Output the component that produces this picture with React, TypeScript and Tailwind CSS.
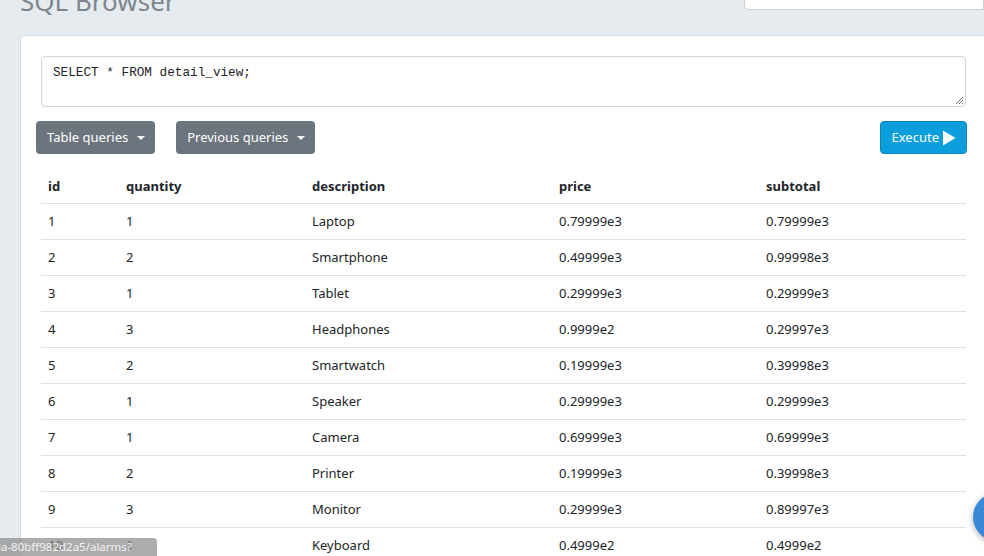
import React from "react";

const rows = [
  ["1", "1", "Laptop", "0.79999e3", "0.79999e3"],
  ["2", "2", "Smartphone", "0.49999e3", "0.99998e3"],
  ["3", "1", "Tablet", "0.29999e3", "0.29999e3"],
  ["4", "3", "Headphones", "0.9999e2", "0.29997e3"],
  ["5", "2", "Smartwatch", "0.19999e3", "0.39998e3"],
  ["6", "1", "Speaker", "0.29999e3", "0.29999e3"],
  ["7", "1", "Camera", "0.69999e3", "0.69999e3"],
  ["8", "2", "Printer", "0.19999e3", "0.39998e3"],
  ["9", "3", "Monitor", "0.29999e3", "0.89997e3"],
  ["10", "1", "Keyboard", "0.4999e2", "0.4999e2"],
];

const Caret = () => (
  <span className="ml-[9px] inline-block h-0 w-0 border-x-[4px] border-t-[4.5px] border-x-transparent border-t-white align-middle" />
);

export default function App() {
  return (
    <div
      className="relative h-[556px] w-[984px] overflow-hidden bg-[#e5ebef] text-[#212529]"
      style={{ fontFamily: '"Noto Sans", "Open Sans", sans-serif' }}
    >
      <div className="flex h-[35px] items-start justify-between">
        <div className="ml-[20px] -mt-[15px] text-[26px] leading-[32px] text-[#7d868d]">SQL Browser</div>
        <div className="-mt-[30px] h-[40px] w-[240px] rounded-bl-[5px] border border-[#c9d1d8] bg-white" />
      </div>
      <div className="ml-[20px] w-[966px] rounded-tl-[4px] border-l border-t border-[#d2dbe2] bg-white p-5">
        <div
          className="relative h-[51px] w-full rounded-[4px] border border-[#ced4da] px-[11px] pt-[8px] text-[12.7px] leading-[16px] text-[#212529]"
          style={{ fontFamily: '"Liberation Mono", monospace' }}
        >
          SELECT * FROM detail_view;
          <svg className="absolute bottom-[2px] right-[2px]" width="8" height="8" viewBox="0 0 8 8">
            <path d="M8 1 L1 8 M8 4 L4 8 M8 7 L7 8" stroke="#777" strokeWidth="1" />
          </svg>
        </div>
        <div className="-ml-[5px] -mr-[1px] mt-[14px] flex items-center">
          <button className="flex h-[33px] items-center rounded-[4px] bg-[#6c757d] pl-[11px] pr-[10px] pt-[1px] text-[13px] text-white">
            Table queries
            <Caret />
          </button>
          <button className="ml-[21px] flex h-[33px] items-center rounded-[4px] bg-[#6c757d] pl-[11px] pr-[10px] pt-[1px] text-[13px] text-white">
            Previous queries
            <Caret />
          </button>
          <button className="ml-auto flex h-[33px] items-center rounded-[4px] border border-[#0a86bb] bg-[#0a9fdc] pl-[11px] pr-[10px] pt-[1px] text-[13px] text-white">
            Execute
            <svg className="ml-[3px]" width="14" height="16" viewBox="0 0 14 16">
              <path d="M1 0.5 L13.5 8 L1 15.5 Z" fill="white" />
            </svg>
          </button>
        </div>
        <table className="mt-[14px] w-full border-collapse text-[13px]">
          <thead>
            <tr className="h-[35px] border-b border-[#dee2e6] text-left font-bold">
              <th className="w-[78px] pl-[7px] pt-[2px] font-bold">id</th>
              <th className="w-[186px] pl-[7px] pt-[2px] font-bold">quantity</th>
              <th className="w-[247px] pl-[7px] pt-[2px] font-bold">description</th>
              <th className="w-[207px] pl-[7px] pt-[2px] font-bold">price</th>
              <th className="pl-[7px] pt-[2px] font-bold">subtotal</th>
            </tr>
          </thead>
          <tbody>
            {rows.map((r) => (
              <tr key={r[0]} className="h-[36px] border-b border-[#dee2e6]">
                {r.map((c, i) => (
                  <td key={i} className="pl-[7px] pt-[2px]">
                    {c}
                  </td>
                ))}
              </tr>
            ))}
          </tbody>
        </table>
      </div>
      <div className="absolute bottom-0 left-0 flex h-[18px] w-[157px] items-center overflow-hidden rounded-tr-[4px] bg-[rgba(140,140,140,0.72)] text-[11.5px] text-[#f2f2f2]">
        <span className="-ml-[2px] whitespace-nowrap">la-80bff982d2a5/alarms?</span>
      </div>
      <div className="absolute left-[973px] top-[493px] h-[48px] w-[48px] rounded-full bg-[#3a88d8] shadow-[0_2px_6px_rgba(0,0,0,0.3)]" />
    </div>
  );
}
